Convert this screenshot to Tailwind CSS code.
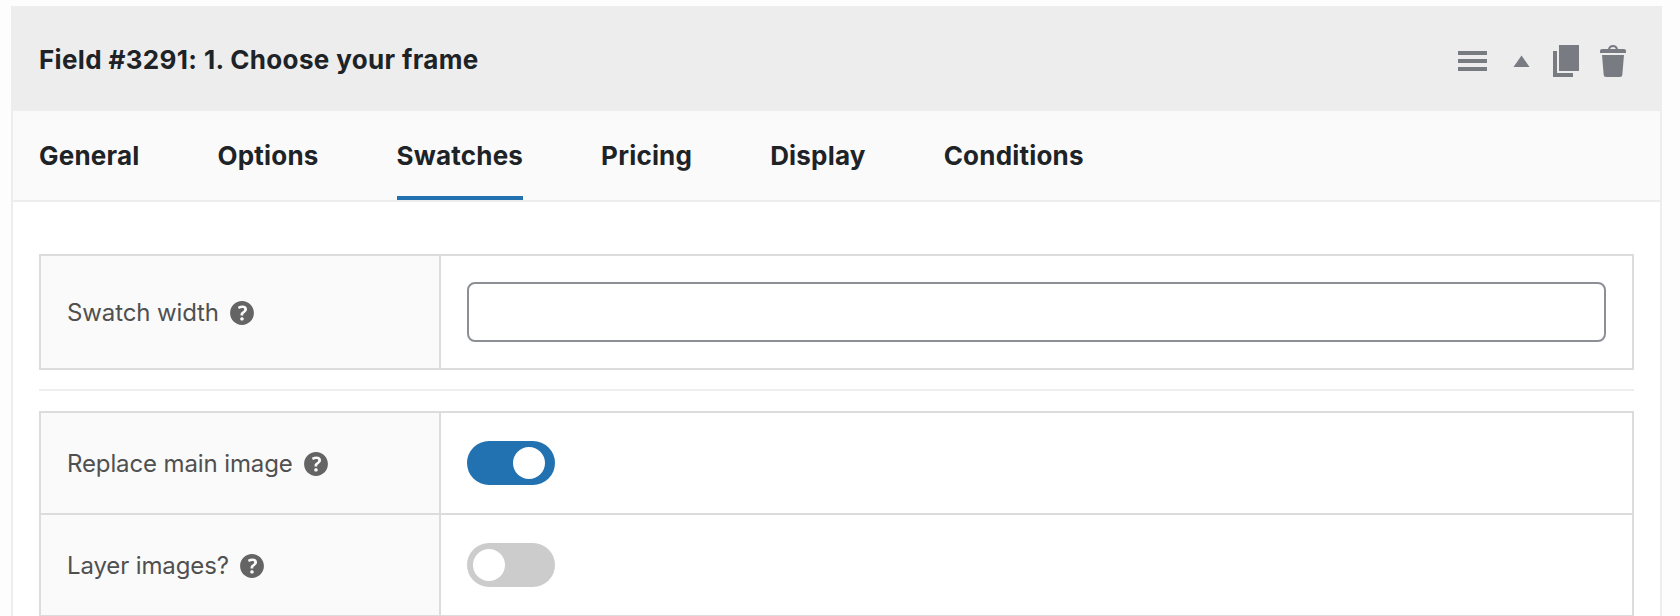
<!DOCTYPE html>
<html lang="en">
<head>
<meta charset="utf-8">
<title>Field settings</title>
<script src="https://cdn.jsdelivr.net/npm/@tailwindcss/browser@4"></script>
</head>
<body class="bg-[#fdfdfd] font-['Inter',sans-serif] h-[616px] overflow-hidden pt-[6px] pl-[11px] pr-[18px]">
<svg class="hidden">
  <symbol id="help" viewBox="0 0 20 20"><path fill="#646464" fill-rule="evenodd" d="M17 10c0-3.87-3.14-7-7-7-3.87 0-7 3.13-7 7s3.13 7 7 7c3.86 0 7-3.13 7-7zm-6.3 1.48H9.14v-.43c0-.38.08-.7.24-.98s.46-.57.88-.89c.41-.29.68-.53.81-.71.14-.18.2-.39.2-.62 0-.25-.09-.44-.28-.58-.19-.13-.45-.19-.79-.19-.58 0-1.25.19-2 .57l-.64-1.28c.87-.49 1.8-.74 2.77-.74.81 0 1.45.2 1.92.58.48.39.71.91.71 1.55 0 .43-.09.8-.29 1.11-.19.32-.57.67-1.11 1.06-.38.28-.61.49-.71.63-.1.15-.15.34-.15.57v.35zm-1.47 2.74c-.18-.17-.27-.42-.27-.73 0-.33.08-.58.26-.75s.43-.25.77-.25c.32 0 .57.09.75.26s.27.42.27.74c0 .3-.09.55-.27.72-.18.18-.43.27-.75.27-.33 0-.58-.09-.76-.26z"/></symbol>
</svg>
<section class="bg-white h-[640px] border-x-2 border-[#ededed]">
  <header class="h-[105px] bg-[#ededed] flex items-center justify-between pt-[3px] pl-[26px] pr-[32px] text-[#787c82]">
    <h1 class="text-[26px] leading-8 font-bold tracking-[0.35px] text-[#1d2327]">Field #3291: 1. Choose your frame</h1>
    <svg class="w-[170px] h-[40px] mt-[2px]" viewBox="0 0 170 40" fill="currentColor">
      <path d="M0 10h29v4H0zM0 18h29v4H0zM0 26h29v4H0z"/>
      <path d="M63.500 14.500l8 11.500h-16z"/>
      <path d="M101 4h20v26h-20zM95 10h4v22h16v4H95z"/>
      <path d="M142 12V10q0-2 2-2h6q1-4 5-4t5 4h6q2 0 2 2v2zM152 8h6q-1-2-3-2t-3 2zM144 14h22l-1.700 20q-.2 2-2.200 2h-14.200q-2 0-2.200-2z" fill-rule="evenodd"/>
    </svg>
  </header>
  <nav class="h-[91px] bg-[#fafafa] border-b-2 border-[#ededed] pl-[26px] flex gap-[78px] text-[26px] leading-[90px] font-bold tracking-[0.2px] text-[#1d2327]">
    <a>General</a><a>Options</a><a class="border-b-4 border-[#2271b1]">Swatches</a><a>Pricing</a><a>Display</a><a>Conditions</a>
  </nav>
  <div class="pt-[52px] pl-[26px] pr-[26px] text-[24px] tracking-[-0.12px] text-[#505050]">
    <div class="h-[116px] border-2 border-[#dcdcdc] flex">
      <div class="w-[400px] bg-[#fafafa] border-r-2 border-[#dcdcdc] flex items-center pt-[2px] pl-[26px]"><span>Swatch width</span><svg class="size-[34px] ml-[6px]"><use href="#help"/></svg></div>
      <div class="flex-1 p-[26px]"><input class="block w-full h-[60px] pl-3 border-2 border-[#8c8f94] rounded-[8px] bg-white"></div>
    </div>
    <div class="mt-[19px] h-[2px] bg-[#eeeeee]"></div>
    <div class="mt-[20px] border-2 border-[#dcdcdc]">
      <div class="h-[102px] border-b-2 border-[#dcdcdc] flex">
        <div class="w-[400px] bg-[#fafafa] border-r-2 border-[#dcdcdc] flex items-center pt-[2px] pl-[26px]"><span>Replace main image</span><svg class="size-[34px] ml-[6px]"><use href="#help"/></svg></div>
        <div class="flex items-center pl-[26px]"><div class="w-[88px] h-[44px] rounded-full bg-[#2271b1] flex items-center justify-end px-[10px]"><div class="size-[32px] rounded-full bg-white"></div></div></div>
      </div>
      <div class="h-[100px] flex">
        <div class="w-[400px] bg-[#fafafa] border-r-2 border-[#dcdcdc] flex items-center pt-[2px] pl-[26px]"><span>Layer images?</span><svg class="size-[34px] ml-[6px]"><use href="#help"/></svg></div>
        <div class="flex items-center pl-[26px]"><div class="w-[88px] h-[44px] rounded-full bg-[#cccccc] flex items-center px-[6px]"><div class="size-[32px] rounded-full bg-white"></div></div></div>
      </div>
    </div>
  </div>
</section>
</body>
</html>
